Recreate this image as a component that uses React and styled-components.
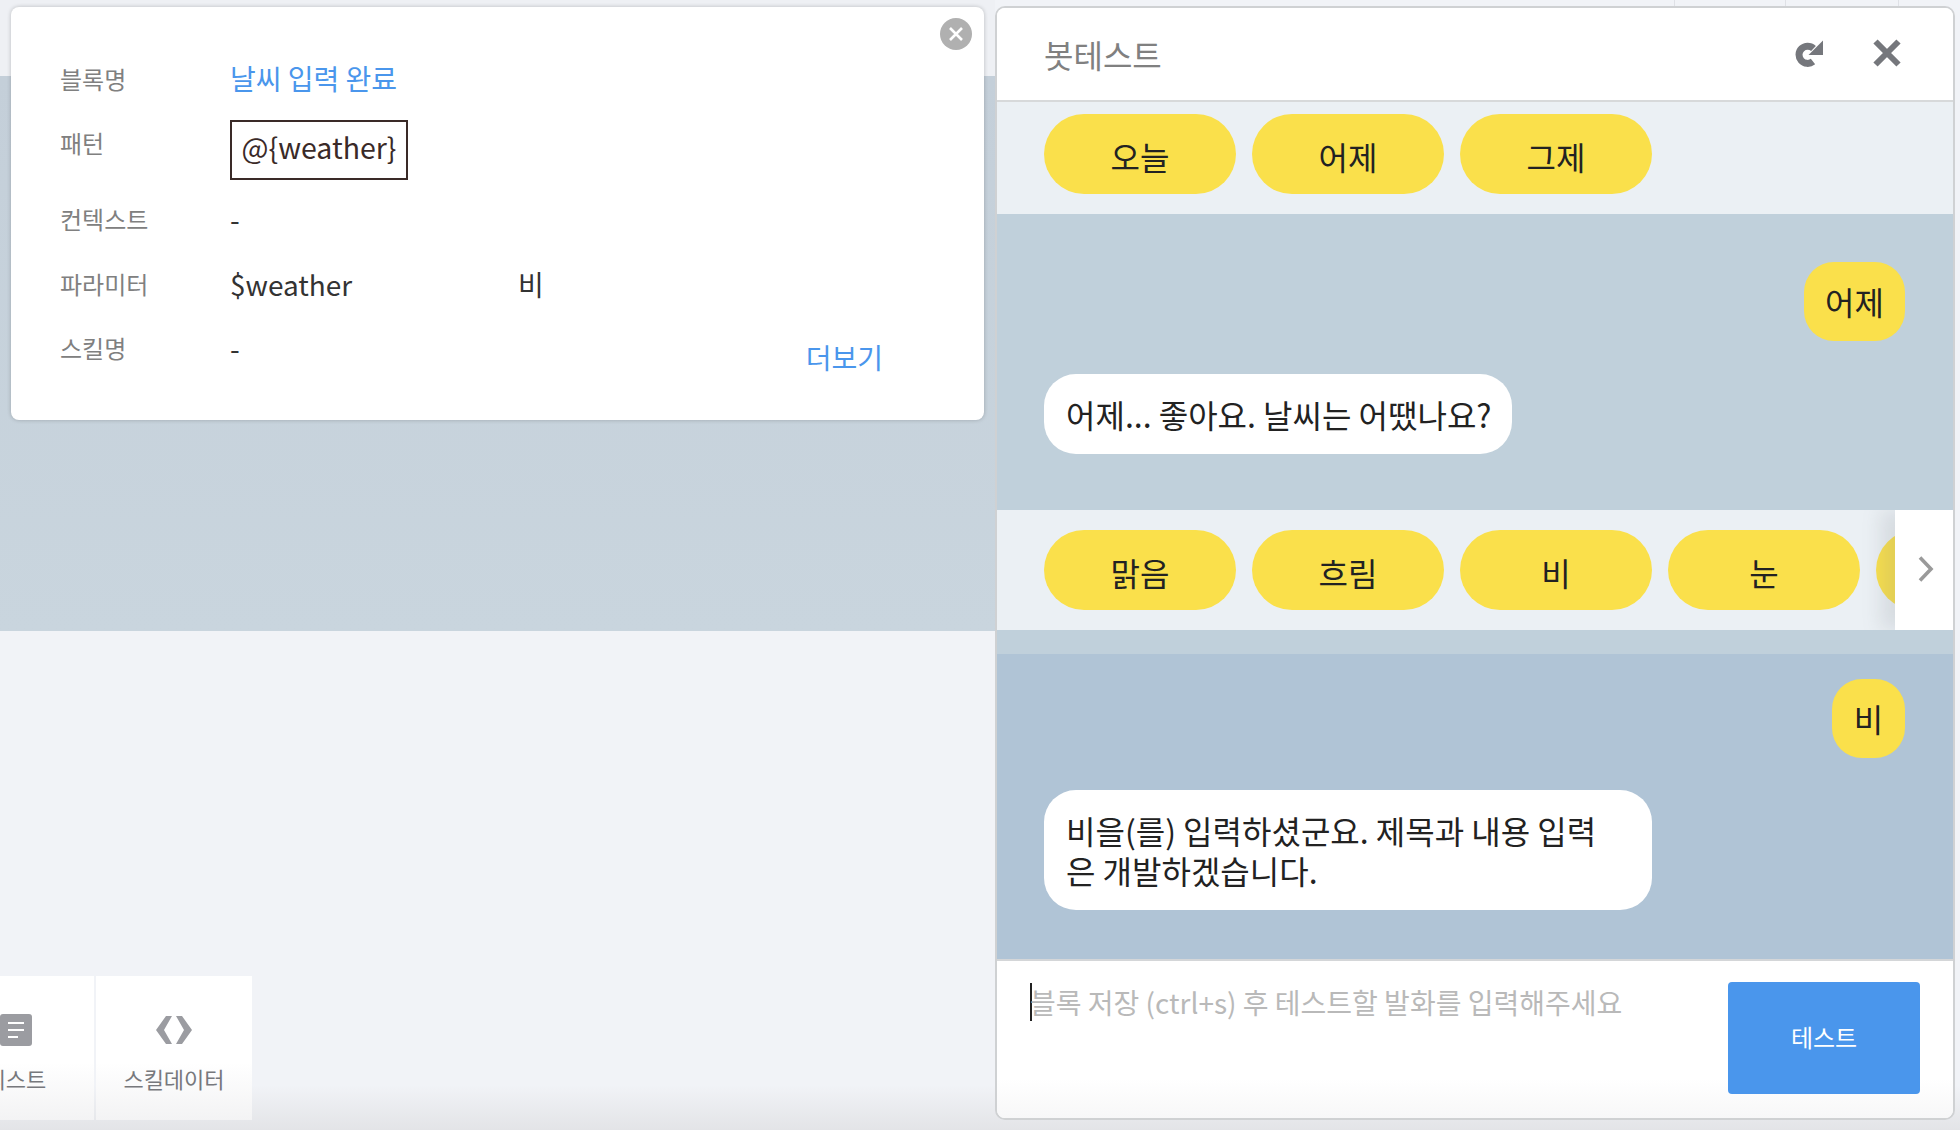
import React from 'react';
import styled, { createGlobalStyle } from 'styled-components';

const GlobalStyle = createGlobalStyle`
  html, body {
    margin: 0;
    padding: 0;
    background: #f1f3f7;
  }
  * {
    box-sizing: border-box;
  }
  body {
    font-family: "Noto Sans CJK KR", "Noto Sans", sans-serif;
  }
`;

function RefreshIcon() {
  return (
    <svg width="30" height="27" viewBox="0 0 30 27">
      <path d="M19 21.5A8.6 8.6 0 1 1 19.5 8.5" fill="none" stroke="#75777c" strokeWidth="7" />
      <path d="M29 0.5V15H14.5Z" fill="#75777c" />
    </svg>
  );
}

function CloseIcon() {
  return (
    <svg width="28" height="28" viewBox="0 0 28 28">
      <path d="M2.5 2.5L25.5 25.5M25.5 2.5L2.5 25.5" fill="none" stroke="#75777c" strokeWidth="6" />
    </svg>
  );
}

function ChevronIcon() {
  return (
    <svg width="18" height="26" viewBox="0 0 18 26">
      <path d="M3 1.5L14 13L3 24.5" fill="none" stroke="#9a9a9a" strokeWidth="3.6" />
    </svg>
  );
}

function ListIcon() {
  return (
    <svg width="32" height="32" viewBox="0 0 32 32">
      <rect width="32" height="32" rx="3" fill="#9b9ca1" />
      <path d="M8 9H24M8 16H24M8 23H18" stroke="#fff" strokeWidth="2" />
    </svg>
  );
}

function CodeIcon() {
  return (
    <svg width="36" height="28" viewBox="0 0 36 28">
      <path d="M10 0H16L8 14L16 28H10L0 14Z" fill="#9b9ca1" />
      <path d="M26 0H20L28 14L20 28H26L36 14Z" fill="#9b9ca1" />
    </svg>
  );
}

function App() {
  return (
    <Page>
      <GlobalStyle />
      <LeftColumn>
        <TopStrip />
        <Band />
        <Lower>
          <Tab>
            <TabIcon>
              <ListIcon />
            </TabIcon>
            <TabLabel>리스트</TabLabel>
          </Tab>
          <Tab>
            <TabIcon>
              <CodeIcon />
            </TabIcon>
            <TabLabel>스킬데이터</TabLabel>
          </Tab>
        </Lower>
        <Card>
          <CardClose>
            <svg width="16" height="16" viewBox="0 0 16 16">
              <path d="M2 2L14 14M14 2L2 14" stroke="#fff" strokeWidth="2.6" />
            </svg>
          </CardClose>
          <DetailRow $height={66}>
            <DetailLabel>블록명</DetailLabel>
            <BlockName>날씨 입력 완료</BlockName>
          </DetailRow>
          <DetailRow $height={74}>
            <DetailLabel $raise={15}>패턴</DetailLabel>
            <PatternBox>@{'{'}weather{'}'}</PatternBox>
          </DetailRow>
          <DetailRow $height={66}>
            <DetailLabel>컨텍스트</DetailLabel>
            <Value>-</Value>
          </DetailRow>
          <DetailRow $height={64}>
            <DetailLabel>파라미터</DetailLabel>
            <ParamGrid>
              <Value>$weather</Value>
              <Value>비</Value>
            </ParamGrid>
          </DetailRow>
          <DetailRow $height={64}>
            <DetailLabel>스킬명</DetailLabel>
            <ParamGrid>
              <Value>-</Value>
              <MoreLink>더보기</MoreLink>
            </ParamGrid>
          </DetailRow>
        </Card>
      </LeftColumn>

      <RightColumn>
        <Panel>
          <PanelHeader>
            <PanelTitle>봇테스트</PanelTitle>
            <HeaderIcons>
              <RefreshIcon />
              <CloseIcon />
            </HeaderIcons>
          </PanelHeader>

          <ChipBand $top={12} $bottom={20}>
            <Chip>오늘</Chip>
            <Chip>어제</Chip>
            <Chip>그제</Chip>
          </ChipBand>

          <Chat $bg="#c0d0db" $top={48} $gap={33} $bottom={56}>
            <UserBubble>어제</UserBubble>
            <BotBubble>어제... 좋아요. 날씨는 어땠나요?</BotBubble>
          </Chat>

          <ChipBand $top={20} $bottom={20}>
            <Chip>맑음</Chip>
            <Chip>흐림</Chip>
            <Chip>비</Chip>
            <Chip>눈</Chip>
            <Chip />
            <ScrollArrow>
              <ChevronIcon />
            </ScrollArrow>
          </ChipBand>
          <BandGap />

          <Chat $bg="#b0c4d6" $top={25} $gap={32} $bottom={49}>
            <UserBubble>비</UserBubble>
            <BotBubble $wide>비을(를) 입력하셨군요. 제목과 내용 입력은 개발하겠습니다.</BotBubble>
          </Chat>

          <Composer>
            <Placeholder>블록 저장 (ctrl+s) 후 테스트할 발화를 입력해주세요</Placeholder>
            <SendButton>테스트</SendButton>
          </Composer>
        </Panel>
      </RightColumn>
    </Page>
  );
}

const Page = styled.div`
  display: grid;
  grid-template-columns: 995px 965px;
  width: 1960px;
  height: 1130px;
  overflow: hidden;
  background: linear-gradient(180deg, #f1f3f7 96%, #e3e4e7 100%);
`;

const LeftColumn = styled.div`
  position: relative;
  display: flex;
  flex-direction: column;
  overflow: hidden;
`;

const TopStrip = styled.div`
  height: 76px;
  background: #eef0f4;
`;

const Band = styled.div`
  height: 555px;
  background: linear-gradient(180deg, #c4cfd9 0%, #c9d5de 100%);
`;

const Lower = styled.div`
  flex: 1;
  display: flex;
  align-items: flex-end;
  gap: 2px;
  margin-left: -62px;
  padding-bottom: 10px;
`;

const Tab = styled.div`
  width: 156px;
  height: 144px;
  display: flex;
  flex-direction: column;
  align-items: center;
  padding-top: 38px;
  background: linear-gradient(180deg, #fff 60%, #f3f3f4 100%);
`;

const TabIcon = styled.div`
  height: 32px;
  display: flex;
  align-items: center;
`;

const TabLabel = styled.div`
  margin-top: 16px;
  font-size: 22px;
  line-height: 32px;
  color: #77787c;
  white-space: nowrap;
`;

const Card = styled.div`
  position: absolute;
  left: 11px;
  top: 7px;
  width: 973px;
  height: 413px;
  padding: 40px 49px 0;
  background: #fff;
  border-radius: 8px;
  box-shadow: 0 0 4px rgba(0, 0, 0, 0.22);
`;

const CardClose = styled.div`
  position: absolute;
  right: 12px;
  top: 11px;
  width: 32px;
  height: 32px;
  border-radius: 50%;
  background: #b0b0b0;
  display: flex;
  align-items: center;
  justify-content: center;
`;

const DetailRow = styled.div`
  display: grid;
  grid-template-columns: 170px 1fr;
  align-items: center;
  height: ${(p) => p.$height}px;
`;

const DetailLabel = styled.div`
  margin-bottom: ${(p) => p.$raise ?? 3}px;
  font-size: 24px;
  color: #808080;
`;

const BlockName = styled.div`
  margin-bottom: 4px;
  font-size: 28px;
  color: #4a96ec;
`;

const PatternBox = styled.div`
  width: 178px;
  height: 60px;
  padding-bottom: 8px;
  border: 2px solid #3a2a28;
  display: flex;
  align-items: center;
  justify-content: center;
  font-size: 28.5px;
  color: #3a2a28;
`;

const Value = styled.div`
  margin-bottom: 2px;
  font-size: 28px;
  color: #333;
`;

const ParamGrid = styled.div`
  display: grid;
  grid-template-columns: 288px 1fr;
  align-items: center;
`;

const MoreLink = styled.div`
  justify-self: end;
  margin-right: 52px;
  margin-top: 16px;
  font-size: 28px;
  color: #4a96ec;
`;

const RightColumn = styled.div`
  min-width: 0;
  padding: 6px 5px 10px 0;
  background-image: linear-gradient(#dfe1e6, #dfe1e6), linear-gradient(#dfe1e6, #dfe1e6),
    linear-gradient(#dfe1e6, #dfe1e6);
  background-size: 1px 6px;
  background-repeat: no-repeat;
  background-position: 679px 0, 790px 0, 903px 0;
`;

const Panel = styled.div`
  width: 960px;
  height: 100%;
  display: flex;
  flex-direction: column;
  border: 2px solid #cfd1d3;
  border-radius: 10px;
  overflow: hidden;
  background: #fff;
`;

const PanelHeader = styled.div`
  flex: none;
  height: 94px;
  display: flex;
  align-items: center;
  justify-content: space-between;
  padding: 0 52px 2px 47px;
  background: #fff;
  border-bottom: 2px solid #d7d9da;
`;

const PanelTitle = styled.div`
  margin-top: 2px;
  font-size: 32px;
  color: #808080;
`;

const HeaderIcons = styled.div`
  display: flex;
  align-items: center;
  gap: 49px;
`;

const ChipBand = styled.div`
  position: relative;
  flex: none;
  display: flex;
  gap: 16px;
  padding: ${(p) => p.$top}px 0 ${(p) => p.$bottom}px 47px;
  background: #ebf0f4;
  overflow: hidden;
`;

const Chip = styled.div`
  flex: none;
  width: 192px;
  height: 80px;
  padding-top: 4px;
  border-radius: 40px;
  background: #fae04b;
  display: flex;
  align-items: center;
  justify-content: center;
  font-size: 32px;
  color: #222;
`;

const ScrollArrow = styled.div`
  position: absolute;
  right: 0;
  top: 0;
  bottom: 0;
  width: 58px;
  padding: 0 0 2px 3px;
  display: flex;
  align-items: center;
  justify-content: center;
  background: #fff;
  box-shadow: -14px 0 18px rgba(120, 130, 140, 0.18);
`;

const BandGap = styled.div`
  flex: none;
  height: 24px;
  background: #c0d0db;
`;

const Chat = styled.div`
  flex: none;
  display: flex;
  flex-direction: column;
  gap: ${(p) => p.$gap}px;
  padding: ${(p) => p.$top}px 48px ${(p) => p.$bottom}px 47px;
  background: ${(p) => p.$bg};
`;

const UserBubble = styled.div`
  align-self: flex-end;
  min-width: 73px;
  padding: 19px 21px;
  border-radius: 30px;
  background: #fae04b;
  font-size: 32px;
  line-height: 41px;
  text-align: center;
  color: #222;
`;

const BotBubble = styled.div`
  align-self: flex-start;
  max-width: 608px;
  width: ${(p) => (p.$wide ? '608px' : 'auto')};
  padding: 20px ${(p) => (p.$wide ? 32 : 20)}px 20px 22px;
  border-radius: 32px;
  background: #fff;
  font-size: 32px;
  line-height: 40px;
  color: #222;
  word-break: break-all;
`;

const Composer = styled.div`
  flex: 1;
  display: flex;
  justify-content: space-between;
  align-items: flex-start;
  padding: 21px 33px 0 33px;
  border-top: 2px solid #d4d6d8;
  background: linear-gradient(180deg, #fff 75%, #f7f7f8 100%);
`;

const Placeholder = styled.div`
  margin-top: 1px;
  font-size: 28px;
  line-height: 38px;
  color: #b9b9b9;
  border-left: 2px solid #222;
  text-indent: -2px;
  white-space: nowrap;
`;

const SendButton = styled.div`
  width: 192px;
  height: 112px;
  padding-bottom: 3px;
  border-radius: 4px;
  background: #4a96ec;
  color: #fff;
  font-size: 24px;
  display: flex;
  align-items: center;
  justify-content: center;
`;

export default App;
